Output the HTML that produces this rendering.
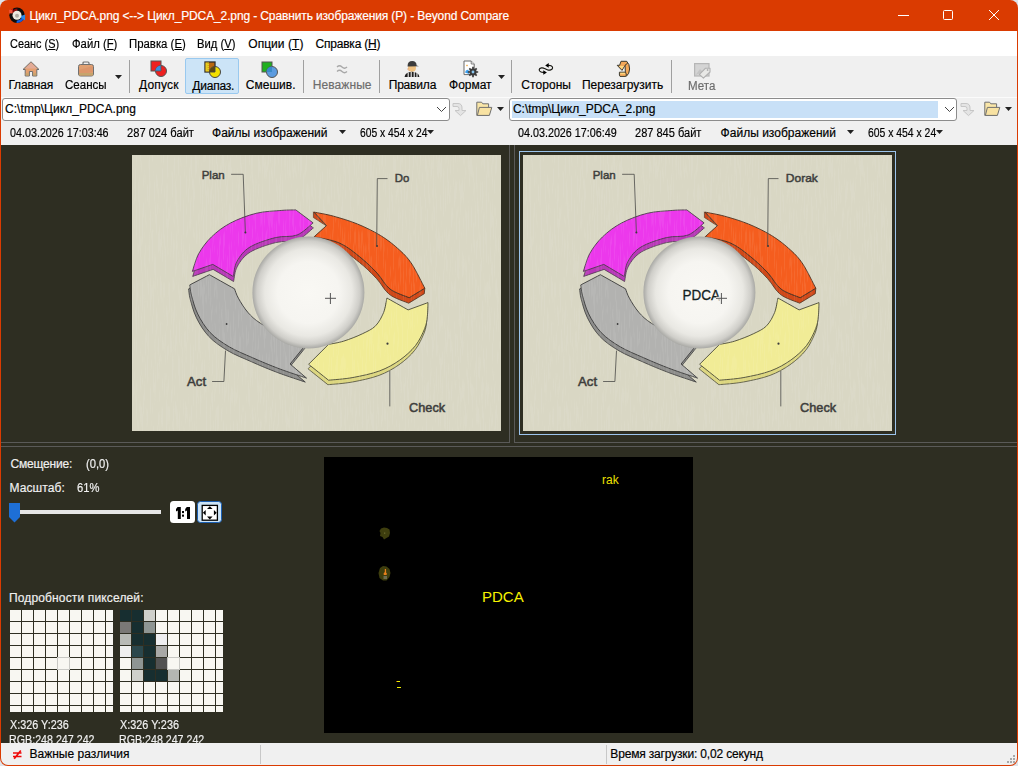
<!DOCTYPE html>
<html><head><meta charset="utf-8">
<style>
*{margin:0;padding:0;box-sizing:border-box}
html,body{width:1018px;height:766px;overflow:hidden}
body{position:relative;background:#da3b01;font-family:"Liberation Sans",sans-serif;font-size:12px}
.a{position:absolute}
.tx{position:absolute;white-space:pre;font-size:12px;line-height:14px;font-family:"Liberation Sans",sans-serif;-webkit-text-stroke:0.18px currentColor}
.tx u{text-decoration:underline;text-underline-offset:1px}
.sep{position:absolute;width:1px;background:#a0a0a0}
</style></head><body>
<!-- outside corners -->
<div class="a" style="left:0;top:0;width:1018px;height:766px;background:#dfe4ea"></div>
<div class="a" style="left:0;top:0;width:1018px;height:766px;background:#da3b01;border-radius:8px"></div>
<!-- menu -->
<div class="a" style="left:1px;top:31px;width:1016px;height:25px;background:#fff"></div>
<!-- toolbar -->
<div class="a" style="left:1px;top:56px;width:1016px;height:89px;background:#f0f0f0"></div>
<div class="a" style="left:1px;top:97px;width:1016px;height:1px;background:#fbfbfb"></div>
<!-- dark area -->
<div class="a" style="left:1px;top:145px;width:1016px;height:598px;background:#2e2e22"></div>
<!-- status -->
<div class="a" style="left:1px;top:743px;width:1016px;height:22px;background:#f0f0f0;border-radius:0 0 7px 7px"></div>

<!-- title icon -->
<svg class="a" style="left:6px;top:4px" width="22" height="22" viewBox="0 0 22 22">
<circle cx="11" cy="11.3" r="7.7" fill="#0c0c0c"/>
<path d="M6 8.5 A6.5 6.5 0 0 1 11.5 4.6 L11 7.2 A4.5 4.5 0 0 0 8 9.2Z" fill="#8a0808"/>
<rect x="3.2" y="5.8" width="3.4" height="3.6" fill="#f2543a"/>
<path d="M5.8 5.5 L7.4 4.8 L6.6 7Z" fill="#f01020"/>
<path d="M18.8 12.4 A7.8 7.8 0 0 1 10.5 19 L10.8 16.4 A5 5 0 0 0 16 12.6Z" fill="#1560e0"/>
<path d="M13.5 12.5 L19.2 10.5 L19 16.5Z" fill="#2a8ae8"/>
<circle cx="11" cy="11.3" r="4.5" fill="#ecebe0"/>
<circle cx="11" cy="11.8" r="2" fill="#b0aea4"/>
</svg>
<!-- window buttons -->
<div class="a" style="left:898px;top:15px;width:11px;height:1px;background:#fff"></div>
<div class="a" style="left:943px;top:10px;width:10px;height:10px;border:1px solid #fff;border-radius:1.5px"></div>
<svg class="a" style="left:988px;top:9px" width="12" height="12" viewBox="0 0 12 12"><path d="M1 1L11 11M11 1L1 11" stroke="#fff" stroke-width="1"/></svg>

<!-- toolbar icons -->
<svg class="a" style="left:22px;top:61px" width="18" height="16" viewBox="0 0 18 16">
<path d="M9 0.8 L17 8.5 L14.8 8.5 L14.8 15 L10.6 15 L10.6 10.5 L7.4 10.5 L7.4 15 L3.2 15 L3.2 8.5 L1 8.5Z" fill="#e4a070" stroke="#6e6e6e" stroke-width="1"/>
<path d="M9 1.6 L15 7.5 L3 7.5Z" fill="#e3ab97"/>
<rect x="3.7" y="12.3" width="3.2" height="2.2" fill="#c6a46c"/><rect x="11.1" y="12.3" width="3.2" height="2.2" fill="#c6a46c"/>
</svg>
<svg class="a" style="left:77px;top:61px" width="18" height="16" viewBox="0 0 18 16">
<rect x="6" y="1" width="6" height="3" rx="1" fill="none" stroke="#707070" stroke-width="1.2"/>
<rect x="1.5" y="3.5" width="15" height="11.5" rx="2" fill="#e0a072" stroke="#707070" stroke-width="1"/>
<path d="M2 9 L16 5 L16 11 L2 14Z" fill="#d89068" opacity=".6"/>
<rect x="2" y="12" width="14" height="2.5" fill="#c6a46c"/>
</svg>
<svg class="a" style="left:115px;top:75px" width="8" height="5"><path d="M0 0H7L3.5 4Z" fill="#222"/></svg>
<div class="sep" style="left:129px;top:60px;height:33px"></div>
<!-- Допуск -->
<svg class="a" style="left:150px;top:60px" width="18" height="18" viewBox="0 0 18 18">
<rect x="1" y="1" width="10" height="10" fill="#ee2020" stroke="#555" stroke-width="1"/>
<circle cx="11" cy="11" r="5.5" fill="#ee2020" stroke="#555" stroke-width="1"/>
<path d="M5.5 11 A5.5 5.5 0 0 1 11 5.5 L11 11Z" fill="#3b8de0"/>
<path d="M5.5 11H11V5.5" fill="none" stroke="#555" stroke-width=".8"/>
</svg>
<!-- Диапаз highlight -->
<div class="a" style="left:185px;top:58px;width:54px;height:36px;background:#cce4f7;border:1px solid #99c9ef;border-radius:2px"></div>
<svg class="a" style="left:204px;top:61px" width="18" height="18" viewBox="0 0 18 18">
<rect x="1" y="1" width="10" height="10" fill="#b8680e" stroke="#2e2e2e" stroke-width="1.3"/>
<rect x="1.5" y="1.5" width="3.5" height="9" fill="#e8cc20"/>
<path d="M4.2 2 V10" stroke="#b89010" stroke-width=".8" stroke-dasharray="1 1"/>
<circle cx="11" cy="11" r="5.5" fill="#f2e000" stroke="#444" stroke-width="1"/>
<path d="M5.5 11 A5.5 5.5 0 0 1 11 5.5 L11 11Z" fill="#5a4810"/>
<path d="M5.5 11H11V5.5" fill="none" stroke="#444" stroke-width=".9"/>
</svg>
<!-- Смешив -->
<svg class="a" style="left:261px;top:61px" width="18" height="18" viewBox="0 0 18 18">
<rect x="1" y="1" width="10" height="10" fill="#20b020" stroke="#555" stroke-width="1"/>
<circle cx="11" cy="11" r="5.5" fill="#5b9be0" stroke="#555" stroke-width="1"/>
<path d="M5.5 11 A5.5 5.5 0 0 1 11 5.5 L11 11Z" fill="#3a8ac8"/>
</svg>
<div class="sep" style="left:303px;top:60px;height:33px"></div>
<!-- Неважные ≈ -->
<svg class="a" style="left:336px;top:64px" width="12" height="10" viewBox="0 0 12 10">
<path d="M1 3 Q3.5 0.5 6 3 T11 3 M1 7.5 Q3.5 5 6 7.5 T11 7.5" fill="none" stroke="#a8a8a8" stroke-width="1.3"/>
</svg>
<div class="sep" style="left:379px;top:60px;height:33px"></div>
<!-- Правила referee -->
<svg class="a" style="left:404px;top:60px" width="18" height="18" viewBox="0 0 18 18">
<circle cx="8" cy="7.8" r="4" fill="#f0c282"/>
<path d="M4.1 8.2 Q3.6 9.8 5 10.6" fill="none" stroke="#e09060" stroke-width=".8"/>
<path d="M3.6 6 Q3.6 1 8.2 1 Q12.6 1 12.6 5.6 L15 6.2 L3.6 6.4Z" fill="#3c3c3c"/>
<path d="M0.6 17 Q1.2 12 8 11.8 Q14.8 12 15.4 17Z" fill="#1e1e1e"/>
<path d="M4.2 12.6 V17 M7.2 12 V17 M10.2 12 V17 M13 12.8 V17" stroke="#f2f2f2" stroke-width="1.1"/>
</svg>
<!-- Формат -->
<svg class="a" style="left:463px;top:60px" width="18" height="18" viewBox="0 0 18 18">
<path d="M1 1 H8.2 L11.2 4 V14.6 H1Z" fill="#fff" stroke="#6a6a6a" stroke-width="1"/>
<path d="M8.2 1 V4 H11.2" fill="#e8e8e8" stroke="#6a6a6a" stroke-width=".8"/>
<path d="M4 4.6 L5 5.6 L4 6.6 L3 5.6Z" fill="#f0a840"/>
<path d="M2 12.5 Q2.5 9.5 5 9.8 L6 11 V14Z" fill="#3aa0f0"/>
<circle cx="10" cy="12" r="3.6" fill="#3a3a3a"/>
<path d="M10 6.8 V17.2 M4.8 12 H15.2 M6.3 8.3 L13.7 15.7 M13.7 8.3 L6.3 15.7" stroke="#3a3a3a" stroke-width="1.7"/>
<circle cx="10" cy="12" r="1.4" fill="#8cc8f0"/>
</svg>
<svg class="a" style="left:498px;top:75px" width="8" height="5"><path d="M0 0H7L3.5 4Z" fill="#222"/></svg>
<div class="sep" style="left:511px;top:60px;height:33px"></div>
<!-- Стороны -->
<svg class="a" style="left:536px;top:60px" width="20" height="18" viewBox="0 0 20 18">
<path d="M11.6 5.4 C14 5.0 16.8 6.0 16.6 7.9 C16.4 9.9 13.5 10.5 11.8 10.0 L8.6 8.6 C7 7.3 3.5 7.6 3.2 9.6 C3 11.6 5.5 12.6 8 12.4" fill="none" stroke="#151510" stroke-width="1.15"/>
<path d="M9.2 5.4 L12.7 3.1 L12.7 7.7Z M10.9 12.5 L7.3 10.2 L7.3 14.8Z" fill="#000"/>
</svg>
<!-- Перезагрузить -->
<svg class="a" style="left:612px;top:58px" width="22" height="22" viewBox="0 0 22 22">
<path d="M14.6 3.4 Q17.8 6 17.6 11 Q17.4 16 14.4 18.2 L12.6 17.6 Q13.8 14 13.2 10 Q13 7 12.6 5Z" fill="#f4a858" stroke="#3a3a30" stroke-width="1"/>
<path d="M7.4 14.2 H13.6 L14.4 17 L13.6 18.4 H8 L7.4 17Z" fill="#f8b060" stroke="#3a3a30" stroke-width="1"/>
<path d="M8.4 14.8 H13.2 V16 H8.4Z" fill="#fcd880"/>
<path d="M9 3.3 H14.6 L15.8 5 L13 7.3 L10 12.4 L5.2 7.3 L7.6 7.3Z" fill="#f4a858" stroke="#3a3a30" stroke-width="1" stroke-linejoin="round"/>
<path d="M6.8 8 H12.2 L10 11.2Z" fill="#fcd880"/>
</svg>
<div class="sep" style="left:671px;top:60px;height:33px"></div>
<!-- Мета -->
<svg class="a" style="left:693px;top:62px" width="19" height="17" viewBox="0 0 19 17">
<rect x="1.6" y="1.6" width="14.4" height="12.4" fill="#d4d4d4" stroke="#b6b6b6" stroke-width="1.2"/>
<path d="M2.5 13 L7 7 L10 10Z" fill="#c4c4c4"/>
<path d="M6.4 12.4 L12.6 6.2 H17 V10 L10.4 16.2 Z" fill="#e8e8e6" stroke="#b0b0b0" stroke-width="1.1" stroke-linejoin="round"/>
<circle cx="14.6" cy="8" r=".9" fill="#b0b0b0"/>
</svg>
<!-- path row left -->
<div class="a" style="left:2px;top:98px;width:448px;height:23px;background:#fff;border:1px solid #8c8c8c;border-radius:3px"></div>
<svg class="a" style="left:436px;top:106px" width="11" height="7" viewBox="0 0 11 7"><path d="M1 1 L5.5 5.5 L10 1" fill="none" stroke="#444" stroke-width="1"/></svg>
<svg class="a" style="left:452px;top:102px" width="17" height="15" viewBox="0 0 17 15">
<path d="M1 1.5 H6 Q10 1.5 10 6 V8.5 H14 L8.5 13.6 L3 8.5 H7 V6.5 Q7 4.5 5 4.5 H1Z" fill="#e4e4e4" stroke="#c6c6c6" stroke-width="1" stroke-linejoin="round"/>
</svg>
<svg class="a" style="left:476px;top:101px" width="18" height="16" viewBox="0 0 18 16">
<path d="M0.8 1.2 H5.6 L6.8 2.8 H12.6 V14.4 H0.8Z" fill="#f9e6a8" stroke="#707070" stroke-width="1" stroke-linejoin="round"/>
<path d="M3.4 6.4 H15.8 L13.4 14.4 H1.4Z" fill="#f8e2a2" stroke="#707070" stroke-width="1" stroke-linejoin="round"/>
</svg>
<svg class="a" style="left:497px;top:107px" width="8" height="5"><path d="M0 0H7L3.5 4Z" fill="#222"/></svg>
<!-- path row right -->
<div class="a" style="left:509px;top:98px;width:448px;height:23px;background:#fff;border:1px solid #8c8c8c;border-radius:3px"></div>
<div class="a" style="left:512px;top:101px;width:426px;height:17px;background:#c8e0f7"></div>
<svg class="a" style="left:944px;top:106px" width="11" height="7" viewBox="0 0 11 7"><path d="M1 1 L5.5 5.5 L10 1" fill="none" stroke="#444" stroke-width="1"/></svg>
<svg class="a" style="left:960px;top:102px" width="17" height="15" viewBox="0 0 17 15">
<path d="M1 1.5 H6 Q10 1.5 10 6 V8.5 H14 L8.5 13.6 L3 8.5 H7 V6.5 Q7 4.5 5 4.5 H1Z" fill="#e4e4e4" stroke="#c6c6c6" stroke-width="1" stroke-linejoin="round"/>
</svg>
<svg class="a" style="left:984px;top:101px" width="18" height="16" viewBox="0 0 18 16">
<path d="M0.8 1.2 H5.6 L6.8 2.8 H12.6 V14.4 H0.8Z" fill="#f9e6a8" stroke="#707070" stroke-width="1" stroke-linejoin="round"/>
<path d="M3.4 6.4 H15.8 L13.4 14.4 H1.4Z" fill="#f8e2a2" stroke="#707070" stroke-width="1" stroke-linejoin="round"/>
</svg>
<svg class="a" style="left:1005px;top:107px" width="8" height="5"><path d="M0 0H7L3.5 4Z" fill="#222"/></svg>
<!-- info row triangles -->
<svg class="a" style="left:339px;top:130px" width="8" height="5"><path d="M0 0H7L3.5 4Z" fill="#222"/></svg>
<svg class="a" style="left:427px;top:130px" width="8" height="5"><path d="M0 0H7L3.5 4Z" fill="#222"/></svg>
<svg class="a" style="left:847px;top:130px" width="8" height="5"><path d="M0 0H7L3.5 4Z" fill="#222"/></svg>
<svg class="a" style="left:936px;top:130px" width="8" height="5"><path d="M0 0H7L3.5 4Z" fill="#222"/></svg>

<!-- splitters -->
<div class="a" style="left:509px;top:145px;width:1px;height:297px;background:#5a5a58"></div>
<div class="a" style="left:514px;top:145px;width:1px;height:297px;background:#5a5a58"></div>
<div class="a" style="left:1px;top:442px;width:509px;height:1px;background:#5a5a58"></div><div class="a" style="left:514px;top:442px;width:503px;height:1px;background:#5a5a58"></div>
<div class="a" style="left:1px;top:446px;width:1016px;height:1px;background:#5a5a58"></div>

<!-- images -->
<svg width="0" height="0" style="position:absolute">
<defs>
<filter id="streak" x="0" y="0" width="1" height="1">
<feTurbulence type="fractalNoise" baseFrequency="0.7 0.04" numOctaves="2" seed="3"/>
<feColorMatrix values="0 0 0 0 1  0 0 0 0 1  0 0 0 0 0.96  0 0 0 -7 3.4"/>
</filter>
<radialGradient id="sph" cx="50%" cy="50%" r="50%">
<stop offset="0" stop-color="#f9f8f4"/><stop offset=".55" stop-color="#f6f5f1"/><stop offset=".78" stop-color="#e9e8e3"/><stop offset=".92" stop-color="#cfcec9"/><stop offset="1" stop-color="#a9a9a5"/>
</radialGradient>
<g id="pdca">
<rect width="369" height="276" fill="#d9d7c4"/>
<path d="M60.4,116.4 C61.5,113.4 63.6,104.2 66.8,98.5 C70.0,92.8 74.2,87.0 79.5,81.9 C84.8,76.8 91.2,71.8 98.7,67.9 C106.2,64.0 115.7,60.4 124.2,58.3 C132.7,56.2 143.2,56.0 149.8,55.4 C156.4,54.8 161.5,55.0 163.8,54.9 L181.1,67.9 C178.4,69.9 171.4,77.5 165.1,80.0 C158.8,82.5 151.3,80.6 143.4,82.6 C135.5,84.6 124.3,88.2 117.9,92.1 C111.5,96.0 107.9,101.3 105.1,106.2 C102.3,111.1 101.9,119.0 101.3,121.5 L80.8,109.4 L60.4,116.4 Z" transform="translate(0.3,5)" fill="#b838b8" stroke="#4a3a4a" stroke-width=".8"/><path d="M60.4,116.4 C61.5,113.4 63.6,104.2 66.8,98.5 C70.0,92.8 74.2,87.0 79.5,81.9 C84.8,76.8 91.2,71.8 98.7,67.9 C106.2,64.0 115.7,60.4 124.2,58.3 C132.7,56.2 143.2,56.0 149.8,55.4 C156.4,54.8 161.5,55.0 163.8,54.9 L181.1,67.9 C178.4,69.9 171.4,77.5 165.1,80.0 C158.8,82.5 151.3,80.6 143.4,82.6 C135.5,84.6 124.3,88.2 117.9,92.1 C111.5,96.0 107.9,101.3 105.1,106.2 C102.3,111.1 101.9,119.0 101.3,121.5 L80.8,109.4 L60.4,116.4 Z" fill="#ec38ec" stroke="#4a3a4a" stroke-width=".9"/>
<path d="M182.1,81.8 C186.3,82.8 199.8,84.6 207.5,88.0 C215.2,91.4 221.8,97.0 228.0,102.0 C234.2,107.0 240.0,112.7 245.0,118.0 C250.0,123.3 252.6,129.9 258.0,134.0 C263.4,138.1 274.0,141.2 277.2,142.7 L292.8,133.2 L292.3,138.7 L276.7,148.2 C273.5,146.8 262.9,143.6 257.5,139.5 C252.1,135.4 249.5,128.8 244.5,123.5 C239.5,118.2 233.8,112.5 227.5,107.5 C221.2,102.5 214.7,96.9 207.0,93.5 C199.3,90.1 185.8,88.3 181.6,87.3 Z" fill="#d04818" stroke="#4a3020" stroke-width=".8"/>
<path d="M181.4,56.8 L181.4,62.5 L194.2,70.8 Z" fill="#d04818" stroke="#4a3020" stroke-width=".6"/>
<path d="M182.1,57.1 L194.5,70.6 L182.1,81.8 C186.3,82.8 199.8,84.6 207.5,88.0 C215.2,91.4 221.8,97.0 228.0,102.0 C234.2,107.0 240.0,112.7 245.0,118.0 C250.0,123.3 252.6,129.9 258.0,134.0 C263.4,138.1 274.0,141.2 277.2,142.7 L292.8,133.2 C290.6,129.2 284.1,115.5 279.9,109.1 C275.7,102.7 272.7,99.8 267.5,95.0 C262.3,90.2 255.8,84.9 248.7,80.6 C241.6,76.2 233.0,72.1 225.2,68.9 C217.3,65.7 208.8,63.2 201.6,61.2 C194.4,59.2 185.3,57.8 182.1,57.1 Z" fill="#f55d1e" stroke="#4a3020" stroke-width=".9"/>
<path d="M254.9,143.0 L276.1,154.9 L296.0,147.6 C295.9,149.9 295.9,157.2 295.3,161.5 C294.8,165.8 294.7,168.6 292.7,173.5 C290.7,178.4 287.6,185.4 283.4,190.7 C279.2,196.0 273.5,201.1 267.5,205.3 C261.5,209.5 255.3,213.0 247.6,215.9 C239.8,218.8 229.5,220.9 221.0,222.5 C212.5,224.1 200.6,224.8 196.5,225.2 L176.6,209.3 L196.5,189.4 C199.1,188.8 206.2,187.9 211.8,186.1 C217.4,184.3 225.0,181.4 230.3,178.8 C235.6,176.2 240.1,174.4 243.6,170.8 C247.1,167.2 249.7,162.1 251.6,157.5 C253.5,152.9 254.3,145.4 254.9,143.0 Z" transform="translate(-0.6,4.5)" fill="#dcd680" stroke="#4a4a38" stroke-width=".8"/><path d="M254.9,143.0 L276.1,154.9 L296.0,147.6 C295.9,149.9 295.9,157.2 295.3,161.5 C294.8,165.8 294.7,168.6 292.7,173.5 C290.7,178.4 287.6,185.4 283.4,190.7 C279.2,196.0 273.5,201.1 267.5,205.3 C261.5,209.5 255.3,213.0 247.6,215.9 C239.8,218.8 229.5,220.9 221.0,222.5 C212.5,224.1 200.6,224.8 196.5,225.2 L176.6,209.3 L196.5,189.4 C199.1,188.8 206.2,187.9 211.8,186.1 C217.4,184.3 225.0,181.4 230.3,178.8 C235.6,176.2 240.1,174.4 243.6,170.8 C247.1,167.2 249.7,162.1 251.6,157.5 C253.5,152.9 254.3,145.4 254.9,143.0 Z" fill="#f1ec96" stroke="#4a4a38" stroke-width=".9"/>
<path d="M77.4,119.7 L57.8,129.9 C58.1,131.6 58.1,135.3 59.4,140.1 C60.7,144.9 62.6,152.7 65.7,158.9 C68.8,165.2 73.0,172.1 78.2,177.6 C83.4,183.1 90.0,187.5 97.0,191.7 C104.0,195.9 112.2,199.0 120.5,202.7 C128.8,206.4 138.1,210.3 147.1,213.7 C156.1,217.1 169.9,221.5 174.5,223.1 L158.1,209.0 L175.3,187.8 C171.4,186.6 159.6,184.1 151.8,180.8 C144.0,177.5 134.3,172.1 128.3,168.2 C122.3,164.3 119.5,161.5 115.8,157.3 C112.1,153.1 108.6,147.1 106.4,143.2 C104.2,139.3 103.2,135.4 102.5,133.8 L77.4,119.7 Z" transform="translate(-1.2,4)" fill="#8e8e8c" stroke="#3a3a3a" stroke-width=".8"/><path d="M77.4,119.7 L57.8,129.9 C58.1,131.6 58.1,135.3 59.4,140.1 C60.7,144.9 62.6,152.7 65.7,158.9 C68.8,165.2 73.0,172.1 78.2,177.6 C83.4,183.1 90.0,187.5 97.0,191.7 C104.0,195.9 112.2,199.0 120.5,202.7 C128.8,206.4 138.1,210.3 147.1,213.7 C156.1,217.1 169.9,221.5 174.5,223.1 L158.1,209.0 L175.3,187.8 C171.4,186.6 159.6,184.1 151.8,180.8 C144.0,177.5 134.3,172.1 128.3,168.2 C122.3,164.3 119.5,161.5 115.8,157.3 C112.1,153.1 108.6,147.1 106.4,143.2 C104.2,139.3 103.2,135.4 102.5,133.8 L77.4,119.7 Z" fill="#b2b2b0" stroke="#3a3a3a" stroke-width=".9"/>
<rect width="369" height="276" filter="url(#streak)" opacity=".07"/>
<circle cx="176.4" cy="137.5" r="56" fill="url(#sph)"/>
<path d="M99.1,19.3 H111.2 L113.4,78 M255.5,23.6 H245.3 L244.7,90.6 M257.8,216 V251.4 M80.1,226.5 H91.9 L93.5,195.7" fill="none" stroke="#4a4a48" stroke-width=".8"/>
<g fill="#3a3a3a"><circle cx="113.4" cy="77.5" r="1"/><circle cx="245" cy="91" r="1"/><circle cx="255.5" cy="188.7" r="1.1"/><circle cx="94.6" cy="169" r=".9"/></g>
<path d="M193,143.3 H204 M198.4,138 V149" stroke="#555" stroke-width="1"/>
<text x="69.7" y="23.8" font-family="Liberation Sans" font-size="11" textLength="23" lengthAdjust="spacingAndGlyphs" fill="#3e3e3c" stroke="#3e3e3c" stroke-width=".45">Plan</text>
<text x="277.1" y="256.9" font-family="Liberation Sans" font-size="12.2" textLength="36" lengthAdjust="spacingAndGlyphs" fill="#3e3e3c" stroke="#3e3e3c" stroke-width=".5">Check</text>
<text x="55.1" y="230.9" font-family="Liberation Sans" font-size="12" textLength="19" lengthAdjust="spacingAndGlyphs" fill="#3e3e3c" stroke="#3e3e3c" stroke-width=".5">Act</text>
</g>
</defs>
</svg>
<svg class="a" style="left:132px;top:155px" width="369" height="276" viewBox="0 0 369 276"><use href="#pdca"/>
<text x="262.8" y="27.2" font-family="Liberation Sans" font-size="11" textLength="14.5" lengthAdjust="spacingAndGlyphs" fill="#3e3e3c" stroke="#3e3e3c" stroke-width=".45">Do</text></svg>
<div class="a" style="left:519px;top:151px;width:377px;height:284px;border:1px solid #9cc4ec"></div>
<svg class="a" style="left:523px;top:155px" width="369" height="276" viewBox="0 0 369 276"><use href="#pdca"/>
<text x="262.8" y="26.9" font-family="Liberation Sans" font-size="11" textLength="32" lengthAdjust="spacingAndGlyphs" fill="#3e3e3c" stroke="#3e3e3c" stroke-width=".45">Dorak</text>
<text x="159.5" y="145" font-family="Liberation Sans" font-size="15.4" textLength="37.5" lengthAdjust="spacingAndGlyphs" fill="#142222" stroke="#142222" stroke-width=".3">PDCA</text>
<path d="M193,143.3 H204 M198.4,138 V149" stroke="#f6f6f2" stroke-width="3"/>
<path d="M193,143.3 H204 M198.4,138 V149" stroke="#555" stroke-width="1"/>
</svg>

<!-- diff image -->
<div class="a" style="left:324px;top:457px;width:369px;height:276px;background:#000"></div>
<div class="tx" style="left:602px;top:473px;font-size:12px;color:#eee000;-webkit-text-stroke:0">rak</div>
<div class="tx" style="left:482px;top:590px;font-size:15px;line-height:14px;color:#f6f200;-webkit-text-stroke:0">PDCA</div>
<svg class="a" style="left:376px;top:525px" width="18" height="60" viewBox="0 0 18 60">
<path d="M5 3.5 L8 2.5 L11 3 L13.5 4.5 L14 8 L13 11.5 L10.5 13 L8 14.5 L6.5 12 L4 11 L4.5 8 L3.5 6Z" fill="#3e3e0e"/>
<rect x="8" y="7.5" width="1.3" height="1.3" fill="#6a6a30"/>
<path d="M4 43 L7 41 L10.5 41.5 L13.5 44 L14.5 48 L13.5 52 L10.5 55.5 L7 55.5 L3.5 53 L2.5 48Z" fill="#3e3e0e"/>
<path d="M7.5 51 H11 V54 H7.5Z" fill="#6e6c50"/>
<path d="M8.8 44 L10 44 L10.2 48 L11 48.5 L10.5 50 L7.8 50 L7.6 48.5 L8.8 47Z" fill="#e8801a"/>
</svg>
<div class="a" style="left:396px;top:681px;width:1px;height:1px;background:#a05000"></div><div class="a" style="left:397px;top:681px;width:3px;height:1px;background:#f0f000"></div>
<div class="a" style="left:397px;top:687px;width:4px;height:1px;background:#f0f000"></div>

<!-- bottom panel -->
<div class="a" style="left:20px;top:510px;width:141px;height:4px;background:#e6e6e6"></div>
<svg class="a" style="left:9px;top:503px" width="12" height="20" viewBox="0 0 12 20"><path d="M0 0 H11 V14 L5.5 19.5 L0 14Z" fill="#1e6fd6"/></svg>
<div class="a" style="left:170px;top:501px;width:25px;height:22px;background:#fff;border-radius:3.5px"></div>
<svg class="a" style="left:170px;top:501px" width="25" height="22" viewBox="0 0 25 22">
<path d="M7.6 6 H10.8 V18 H7.8 V9.6 L6 10.4 V8Z M16.8 6 H20 V18 H17 V9.6 L15.2 10.4 V8Z" fill="#000"/>
<rect x="12" y="10" width="2" height="2.1" fill="#000"/><rect x="12" y="13.6" width="2" height="2.1" fill="#000"/>
</svg>
<div class="a" style="left:197px;top:501px;width:25px;height:22px;background:#cce4f7;border:1px solid #1a5fb4;border-radius:3.5px"></div>
<svg class="a" style="left:197px;top:501px" width="25" height="22" viewBox="0 0 25 22">
<rect x="5.2" y="4.4" width="15.2" height="14.8" fill="#fff" stroke="#000" stroke-width="1.3"/>
<path d="M12.8 5.2 L10 8 H15.6Z M12.8 18.4 L10 15.6 H15.6Z M5.9 11.8 L8.7 9 V14.6Z M19.7 11.8 L16.9 9 V14.6Z" fill="#000"/>
</svg>
<!-- pixel grids -->
<div id="g1" class="a" style="left:10px;top:610px;width:103px;height:102px;overflow:hidden;background:#2e2e22"></div>
<div id="g2" class="a" style="left:120px;top:610px;width:103px;height:102px;overflow:hidden;background:#2e2e22"></div>
<div class="a" style="left:10px;top:610px;width:11px;height:11px;background:#f8f7f2"></div>
<div class="a" style="left:22px;top:610px;width:11px;height:11px;background:#f8f7f2"></div>
<div class="a" style="left:34px;top:610px;width:11px;height:11px;background:#f8f7f2"></div>
<div class="a" style="left:46px;top:610px;width:11px;height:11px;background:#f8f7f2"></div>
<div class="a" style="left:58px;top:610px;width:11px;height:11px;background:#f8f7f2"></div>
<div class="a" style="left:70px;top:610px;width:11px;height:11px;background:#f8f7f2"></div>
<div class="a" style="left:82px;top:610px;width:11px;height:11px;background:#f8f7f2"></div>
<div class="a" style="left:94px;top:610px;width:11px;height:11px;background:#f8f7f2"></div>
<div class="a" style="left:106px;top:610px;width:7px;height:11px;background:#f8f7f2"></div>
<div class="a" style="left:10px;top:622px;width:11px;height:11px;background:#f8f7f2"></div>
<div class="a" style="left:22px;top:622px;width:11px;height:11px;background:#f8f7f2"></div>
<div class="a" style="left:34px;top:622px;width:11px;height:11px;background:#f8f7f2"></div>
<div class="a" style="left:46px;top:622px;width:11px;height:11px;background:#f8f7f2"></div>
<div class="a" style="left:58px;top:622px;width:11px;height:11px;background:#f8f7f2"></div>
<div class="a" style="left:70px;top:622px;width:11px;height:11px;background:#f8f7f2"></div>
<div class="a" style="left:82px;top:622px;width:11px;height:11px;background:#f8f7f2"></div>
<div class="a" style="left:94px;top:622px;width:11px;height:11px;background:#f8f7f2"></div>
<div class="a" style="left:106px;top:622px;width:7px;height:11px;background:#f8f7f2"></div>
<div class="a" style="left:10px;top:634px;width:11px;height:11px;background:#f8f7f2"></div>
<div class="a" style="left:22px;top:634px;width:11px;height:11px;background:#f8f7f2"></div>
<div class="a" style="left:34px;top:634px;width:11px;height:11px;background:#f8f7f2"></div>
<div class="a" style="left:46px;top:634px;width:11px;height:11px;background:#f8f7f2"></div>
<div class="a" style="left:58px;top:634px;width:11px;height:11px;background:#f8f7f2"></div>
<div class="a" style="left:70px;top:634px;width:11px;height:11px;background:#f8f7f2"></div>
<div class="a" style="left:82px;top:634px;width:11px;height:11px;background:#f8f7f2"></div>
<div class="a" style="left:94px;top:634px;width:11px;height:11px;background:#f8f7f2"></div>
<div class="a" style="left:106px;top:634px;width:7px;height:11px;background:#f8f7f2"></div>
<div class="a" style="left:10px;top:646px;width:11px;height:11px;background:#f8f7f2"></div>
<div class="a" style="left:22px;top:646px;width:11px;height:11px;background:#f8f7f2"></div>
<div class="a" style="left:34px;top:646px;width:11px;height:11px;background:#f8f7f2"></div>
<div class="a" style="left:46px;top:646px;width:11px;height:11px;background:#f8f7f2"></div>
<div class="a" style="left:58px;top:646px;width:11px;height:11px;background:#f8f7f2"></div>
<div class="a" style="left:70px;top:646px;width:11px;height:11px;background:#f8f7f2"></div>
<div class="a" style="left:82px;top:646px;width:11px;height:11px;background:#f8f7f2"></div>
<div class="a" style="left:94px;top:646px;width:11px;height:11px;background:#f8f7f2"></div>
<div class="a" style="left:106px;top:646px;width:7px;height:11px;background:#f8f7f2"></div>
<div class="a" style="left:10px;top:658px;width:11px;height:11px;background:#f8f7f2"></div>
<div class="a" style="left:22px;top:658px;width:11px;height:11px;background:#f8f7f2"></div>
<div class="a" style="left:34px;top:658px;width:11px;height:11px;background:#f8f7f2"></div>
<div class="a" style="left:46px;top:658px;width:11px;height:11px;background:#f8f7f2"></div>
<div class="a" style="left:58px;top:658px;width:11px;height:11px;background:#f8f7f2"></div>
<div class="a" style="left:70px;top:658px;width:11px;height:11px;background:#f8f7f2"></div>
<div class="a" style="left:82px;top:658px;width:11px;height:11px;background:#f8f7f2"></div>
<div class="a" style="left:94px;top:658px;width:11px;height:11px;background:#f8f7f2"></div>
<div class="a" style="left:106px;top:658px;width:7px;height:11px;background:#f8f7f2"></div>
<div class="a" style="left:10px;top:670px;width:11px;height:11px;background:#f8f7f2"></div>
<div class="a" style="left:22px;top:670px;width:11px;height:11px;background:#f8f7f2"></div>
<div class="a" style="left:34px;top:670px;width:11px;height:11px;background:#f8f7f2"></div>
<div class="a" style="left:46px;top:670px;width:11px;height:11px;background:#f8f7f2"></div>
<div class="a" style="left:58px;top:670px;width:11px;height:11px;background:#f8f7f2"></div>
<div class="a" style="left:70px;top:670px;width:11px;height:11px;background:#f8f7f2"></div>
<div class="a" style="left:82px;top:670px;width:11px;height:11px;background:#f8f7f2"></div>
<div class="a" style="left:94px;top:670px;width:11px;height:11px;background:#f8f7f2"></div>
<div class="a" style="left:106px;top:670px;width:7px;height:11px;background:#f8f7f2"></div>
<div class="a" style="left:10px;top:682px;width:11px;height:11px;background:#f8f7f2"></div>
<div class="a" style="left:22px;top:682px;width:11px;height:11px;background:#f8f7f2"></div>
<div class="a" style="left:34px;top:682px;width:11px;height:11px;background:#f8f7f2"></div>
<div class="a" style="left:46px;top:682px;width:11px;height:11px;background:#f8f7f2"></div>
<div class="a" style="left:58px;top:682px;width:11px;height:11px;background:#f8f7f2"></div>
<div class="a" style="left:70px;top:682px;width:11px;height:11px;background:#f8f7f2"></div>
<div class="a" style="left:82px;top:682px;width:11px;height:11px;background:#f8f7f2"></div>
<div class="a" style="left:94px;top:682px;width:11px;height:11px;background:#f8f7f2"></div>
<div class="a" style="left:106px;top:682px;width:7px;height:11px;background:#f8f7f2"></div>
<div class="a" style="left:10px;top:694px;width:11px;height:11px;background:#f8f7f2"></div>
<div class="a" style="left:22px;top:694px;width:11px;height:11px;background:#f8f7f2"></div>
<div class="a" style="left:34px;top:694px;width:11px;height:11px;background:#f8f7f2"></div>
<div class="a" style="left:46px;top:694px;width:11px;height:11px;background:#f8f7f2"></div>
<div class="a" style="left:58px;top:694px;width:11px;height:11px;background:#f8f7f2"></div>
<div class="a" style="left:70px;top:694px;width:11px;height:11px;background:#f8f7f2"></div>
<div class="a" style="left:82px;top:694px;width:11px;height:11px;background:#f8f7f2"></div>
<div class="a" style="left:94px;top:694px;width:11px;height:11px;background:#f8f7f2"></div>
<div class="a" style="left:106px;top:694px;width:7px;height:11px;background:#f8f7f2"></div>
<div class="a" style="left:10px;top:706px;width:11px;height:6px;background:#f8f7f2"></div>
<div class="a" style="left:22px;top:706px;width:11px;height:6px;background:#f8f7f2"></div>
<div class="a" style="left:34px;top:706px;width:11px;height:6px;background:#f8f7f2"></div>
<div class="a" style="left:46px;top:706px;width:11px;height:6px;background:#f8f7f2"></div>
<div class="a" style="left:58px;top:706px;width:11px;height:6px;background:#f8f7f2"></div>
<div class="a" style="left:70px;top:706px;width:11px;height:6px;background:#f8f7f2"></div>
<div class="a" style="left:82px;top:706px;width:11px;height:6px;background:#f8f7f2"></div>
<div class="a" style="left:94px;top:706px;width:11px;height:6px;background:#f8f7f2"></div>
<div class="a" style="left:106px;top:706px;width:7px;height:6px;background:#f8f7f2"></div>
<div class="a" style="left:57px;top:657px;width:13px;height:13px;border:1px solid #c8c8c4"></div>
<div class="a" style="left:120px;top:610px;width:11px;height:11px;background:#172e30"></div>
<div class="a" style="left:132px;top:610px;width:11px;height:11px;background:#172e30"></div>
<div class="a" style="left:144px;top:610px;width:11px;height:11px;background:#cfd0cb"></div>
<div class="a" style="left:156px;top:610px;width:11px;height:11px;background:#f8f7f2"></div>
<div class="a" style="left:168px;top:610px;width:11px;height:11px;background:#f8f7f2"></div>
<div class="a" style="left:180px;top:610px;width:11px;height:11px;background:#f8f7f2"></div>
<div class="a" style="left:192px;top:610px;width:11px;height:11px;background:#f8f7f2"></div>
<div class="a" style="left:204px;top:610px;width:11px;height:11px;background:#f8f7f2"></div>
<div class="a" style="left:216px;top:610px;width:7px;height:11px;background:#f8f7f2"></div>
<div class="a" style="left:120px;top:622px;width:11px;height:11px;background:#7a7876"></div>
<div class="a" style="left:132px;top:622px;width:11px;height:11px;background:#172e30"></div>
<div class="a" style="left:144px;top:622px;width:11px;height:11px;background:#8e9593"></div>
<div class="a" style="left:156px;top:622px;width:11px;height:11px;background:#f8f7f2"></div>
<div class="a" style="left:168px;top:622px;width:11px;height:11px;background:#f8f7f2"></div>
<div class="a" style="left:180px;top:622px;width:11px;height:11px;background:#f8f7f2"></div>
<div class="a" style="left:192px;top:622px;width:11px;height:11px;background:#f8f7f2"></div>
<div class="a" style="left:204px;top:622px;width:11px;height:11px;background:#f8f7f2"></div>
<div class="a" style="left:216px;top:622px;width:7px;height:11px;background:#f8f7f2"></div>
<div class="a" style="left:120px;top:634px;width:11px;height:11px;background:#b8bab6"></div>
<div class="a" style="left:132px;top:634px;width:11px;height:11px;background:#172e30"></div>
<div class="a" style="left:144px;top:634px;width:11px;height:11px;background:#172e30"></div>
<div class="a" style="left:156px;top:634px;width:11px;height:11px;background:#eeeef0"></div>
<div class="a" style="left:168px;top:634px;width:11px;height:11px;background:#f8f7f2"></div>
<div class="a" style="left:180px;top:634px;width:11px;height:11px;background:#f8f7f2"></div>
<div class="a" style="left:192px;top:634px;width:11px;height:11px;background:#f8f7f2"></div>
<div class="a" style="left:204px;top:634px;width:11px;height:11px;background:#f8f7f2"></div>
<div class="a" style="left:216px;top:634px;width:7px;height:11px;background:#f8f7f2"></div>
<div class="a" style="left:120px;top:646px;width:11px;height:11px;background:#efefef"></div>
<div class="a" style="left:132px;top:646px;width:11px;height:11px;background:#2b474c"></div>
<div class="a" style="left:144px;top:646px;width:11px;height:11px;background:#172e30"></div>
<div class="a" style="left:156px;top:646px;width:11px;height:11px;background:#a8a8a6"></div>
<div class="a" style="left:168px;top:646px;width:11px;height:11px;background:#f8f7f2"></div>
<div class="a" style="left:180px;top:646px;width:11px;height:11px;background:#f8f7f2"></div>
<div class="a" style="left:192px;top:646px;width:11px;height:11px;background:#f8f7f2"></div>
<div class="a" style="left:204px;top:646px;width:11px;height:11px;background:#f8f7f2"></div>
<div class="a" style="left:216px;top:646px;width:7px;height:11px;background:#f8f7f2"></div>
<div class="a" style="left:120px;top:658px;width:11px;height:11px;background:#f8f7f2"></div>
<div class="a" style="left:132px;top:658px;width:11px;height:11px;background:#8e9593"></div>
<div class="a" style="left:144px;top:658px;width:11px;height:11px;background:#172e30"></div>
<div class="a" style="left:156px;top:658px;width:11px;height:11px;background:#525252"></div>
<div class="a" style="left:168px;top:658px;width:11px;height:11px;background:#f8f7f2"></div>
<div class="a" style="left:180px;top:658px;width:11px;height:11px;background:#f8f7f2"></div>
<div class="a" style="left:192px;top:658px;width:11px;height:11px;background:#f8f7f2"></div>
<div class="a" style="left:204px;top:658px;width:11px;height:11px;background:#f8f7f2"></div>
<div class="a" style="left:216px;top:658px;width:7px;height:11px;background:#f8f7f2"></div>
<div class="a" style="left:120px;top:670px;width:11px;height:11px;background:#f8f7f2"></div>
<div class="a" style="left:132px;top:670px;width:11px;height:11px;background:#cfd0cb"></div>
<div class="a" style="left:144px;top:670px;width:11px;height:11px;background:#172e30"></div>
<div class="a" style="left:156px;top:670px;width:11px;height:11px;background:#172e30"></div>
<div class="a" style="left:168px;top:670px;width:11px;height:11px;background:#b4b6b2"></div>
<div class="a" style="left:180px;top:670px;width:11px;height:11px;background:#f8f7f2"></div>
<div class="a" style="left:192px;top:670px;width:11px;height:11px;background:#f8f7f2"></div>
<div class="a" style="left:204px;top:670px;width:11px;height:11px;background:#f8f7f2"></div>
<div class="a" style="left:216px;top:670px;width:7px;height:11px;background:#f8f7f2"></div>
<div class="a" style="left:120px;top:682px;width:11px;height:11px;background:#f8f7f2"></div>
<div class="a" style="left:132px;top:682px;width:11px;height:11px;background:#f8f7f2"></div>
<div class="a" style="left:144px;top:682px;width:11px;height:11px;background:#f8f7f2"></div>
<div class="a" style="left:156px;top:682px;width:11px;height:11px;background:#f8f7f2"></div>
<div class="a" style="left:168px;top:682px;width:11px;height:11px;background:#f8f7f2"></div>
<div class="a" style="left:180px;top:682px;width:11px;height:11px;background:#f8f7f2"></div>
<div class="a" style="left:192px;top:682px;width:11px;height:11px;background:#f8f7f2"></div>
<div class="a" style="left:204px;top:682px;width:11px;height:11px;background:#f8f7f2"></div>
<div class="a" style="left:216px;top:682px;width:7px;height:11px;background:#f8f7f2"></div>
<div class="a" style="left:120px;top:694px;width:11px;height:11px;background:#f8f7f2"></div>
<div class="a" style="left:132px;top:694px;width:11px;height:11px;background:#f8f7f2"></div>
<div class="a" style="left:144px;top:694px;width:11px;height:11px;background:#f8f7f2"></div>
<div class="a" style="left:156px;top:694px;width:11px;height:11px;background:#f8f7f2"></div>
<div class="a" style="left:168px;top:694px;width:11px;height:11px;background:#f8f7f2"></div>
<div class="a" style="left:180px;top:694px;width:11px;height:11px;background:#f8f7f2"></div>
<div class="a" style="left:192px;top:694px;width:11px;height:11px;background:#f8f7f2"></div>
<div class="a" style="left:204px;top:694px;width:11px;height:11px;background:#f8f7f2"></div>
<div class="a" style="left:216px;top:694px;width:7px;height:11px;background:#f8f7f2"></div>
<div class="a" style="left:120px;top:706px;width:11px;height:6px;background:#f8f7f2"></div>
<div class="a" style="left:132px;top:706px;width:11px;height:6px;background:#f8f7f2"></div>
<div class="a" style="left:144px;top:706px;width:11px;height:6px;background:#f8f7f2"></div>
<div class="a" style="left:156px;top:706px;width:11px;height:6px;background:#f8f7f2"></div>
<div class="a" style="left:168px;top:706px;width:11px;height:6px;background:#f8f7f2"></div>
<div class="a" style="left:180px;top:706px;width:11px;height:6px;background:#f8f7f2"></div>
<div class="a" style="left:192px;top:706px;width:11px;height:6px;background:#f8f7f2"></div>
<div class="a" style="left:204px;top:706px;width:11px;height:6px;background:#f8f7f2"></div>
<div class="a" style="left:216px;top:706px;width:7px;height:6px;background:#f8f7f2"></div>
<div class="a" style="left:167px;top:657px;width:13px;height:13px;border:1px solid #c8c8c4"></div>

<!-- status bar -->
<svg class="a" style="left:12px;top:749px" width="11" height="11" viewBox="0 0 11 11"><path d="M1 4 H9.5 M1 7.5 H9.5 M8.8 1.5 L2.2 9.8" stroke="#ee0a0a" stroke-width="1.7"/></svg>
<div class="a" style="left:260px;top:745px;width:1px;height:19px;background:#c8c8c8"></div>
<div class="a" style="left:606px;top:745px;width:1px;height:19px;background:#c8c8c8"></div>
<svg class="a" style="left:1007px;top:755px" width="9" height="9"><g fill="#a8a8a8"><rect x="6" y="0" width="2" height="2"/><rect x="3" y="3" width="2" height="2"/><rect x="6" y="3" width="2" height="2"/><rect x="0" y="6" width="2" height="2"/><rect x="3" y="6" width="2" height="2"/><rect x="6" y="6" width="2" height="2"/></g></svg>


<div class="tx" style="left:29.50px;top:9px;color:#fff;letter-spacing:-0.123px;">Цикл_PDCA.png &lt;--&gt; Цикл_PDCA_2.png - Сравнить изображения (P) - Beyond Compare</div>
<div class="tx" style="left:9.80px;top:37px;color:#000;transform:scaleX(0.9093);transform-origin:0 0;">Сеанс (<u>S</u>)</div>
<div class="tx" style="left:71.50px;top:37px;color:#000;transform:scaleX(0.9417);transform-origin:0 0;">Файл (<u>F</u>)</div>
<div class="tx" style="left:128.75px;top:37px;color:#000;transform:scaleX(0.9483);transform-origin:0 0;">Правка (<u>E</u>)</div>
<div class="tx" style="left:197.47px;top:37px;color:#000;transform:scaleX(0.9350);transform-origin:0 0;">Вид (<u>V</u>)</div>
<div class="tx" style="left:248.30px;top:37px;color:#000;letter-spacing:0.038px;">Опции (<u>T</u>)</div>
<div class="tx" style="left:315.50px;top:37px;color:#000;letter-spacing:-0.21px;">Справка (<u>H</u>)</div>
<div class="tx" style="left:8.40px;top:78px;color:#000;letter-spacing:-0.15px;">Главная</div>
<div class="tx" style="left:65.40px;top:78px;color:#000;transform:scaleX(0.9605);transform-origin:0 0;">Сеансы</div>
<div class="tx" style="left:139.00px;top:78px;color:#000;letter-spacing:0.18px;">Допуск</div>
<div class="tx" style="left:192.30px;top:79px;color:#000;letter-spacing:-0.217px;">Диапаз.</div>
<div class="tx" style="left:245.70px;top:78px;color:#000;letter-spacing:0.033px;">Смешив.</div>
<div class="tx" style="left:312.80px;top:78px;color:#6d6d6d;letter-spacing:0.071px;">Неважные</div>
<div class="tx" style="left:388.70px;top:78px;color:#000;letter-spacing:-0.183px;">Правила</div>
<div class="tx" style="left:449.10px;top:78px;color:#000;letter-spacing:-0.04px;">Формат</div>
<div class="tx" style="left:521.20px;top:78px;color:#000;letter-spacing:0.083px;">Стороны</div>
<div class="tx" style="left:582.00px;top:78px;color:#000;letter-spacing:-0.025px;">Перезагрузить</div>
<div class="tx" style="left:687.84px;top:79px;color:#6d6d6d;transform:scaleX(0.9607);transform-origin:0 0;">Мета</div>
<div class="tx" style="left:5.00px;top:102px;color:#000;letter-spacing:0.053px;">C:\tmp\Цикл_PDCA.png</div>
<div class="tx" style="left:513.00px;top:102px;color:#000;letter-spacing:-0.048px;">C:\tmp\Цикл_PDCA_2.png</div>
<div class="tx" style="left:10.00px;top:126px;color:#000;transform:scaleX(0.8955);transform-origin:0 0;">04.03.2026 17:03:46</div>
<div class="tx" style="left:126.90px;top:126px;color:#000;transform:scaleX(0.9278);transform-origin:0 0;">287 024 байт</div>
<div class="tx" style="left:212.00px;top:126px;color:#000;letter-spacing:0.019px;">Файлы изображений</div>
<div class="tx" style="left:360.30px;top:126px;color:#000;transform:scaleX(0.8570);transform-origin:0 0;">605 x 454 x 24</div>
<div class="tx" style="left:518.40px;top:126px;color:#000;transform:scaleX(0.8964);transform-origin:0 0;">04.03.2026 17:06:49</div>
<div class="tx" style="left:635.30px;top:126px;color:#000;transform:scaleX(0.9194);transform-origin:0 0;">287 845 байт</div>
<div class="tx" style="left:720.60px;top:126px;color:#000;letter-spacing:0.012px;">Файлы изображений</div>
<div class="tx" style="left:868.30px;top:126px;color:#000;transform:scaleX(0.8658);transform-origin:0 0;">605 x 454 x 24</div>
<div class="tx" style="left:10.60px;top:457px;color:#f0f0f0;letter-spacing:-0.212px;">Смещение:</div>
<div class="tx" style="left:86.00px;top:457px;color:#f0f0f0;transform:scaleX(0.9333);transform-origin:0 0;">(0,0)</div>
<div class="tx" style="left:9.60px;top:481px;color:#f0f0f0;letter-spacing:0.071px;">Масштаб:</div>
<div class="tx" style="left:76.60px;top:481px;color:#f0f0f0;transform:scaleX(0.9333);transform-origin:0 0;">61%</div>
<div class="tx" style="left:8.90px;top:591px;color:#f0f0f0;letter-spacing:0.15px;">Подробности пикселей:</div>
<div class="tx" style="left:9.90px;top:718px;color:#f0f0f0;transform:scaleX(0.9015);transform-origin:0 0;">X:326 Y:236</div>
<div class="tx" style="left:120.00px;top:718px;color:#f0f0f0;transform:scaleX(0.9046);transform-origin:0 0;">X:326 Y:236</div>
<div class="tx" style="left:9.01px;top:733px;color:#f0f0f0;transform:scaleX(0.8905);transform-origin:0 0;height:10px;overflow:hidden">RGB:248 247 242</div>
<div class="tx" style="left:119.11px;top:733px;color:#f0f0f0;transform:scaleX(0.8874);transform-origin:0 0;height:10px;overflow:hidden">RGB:248 247 242</div>
<div class="tx" style="left:29.40px;top:747px;color:#000;letter-spacing:0.029px;">Важные различия</div>
<div class="tx" style="left:610.30px;top:747px;color:#000;letter-spacing:-0.165px;">Время загрузки: 0,02 секунд</div>
</body></html>
